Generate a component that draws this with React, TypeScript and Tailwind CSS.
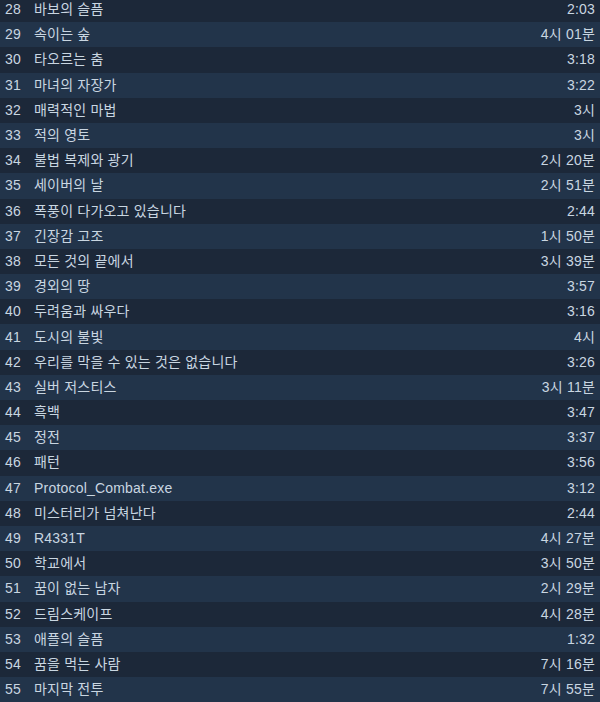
import React from "react";

// 트랙 목록 (28 ~ 55)
const tracks: [string, string][] = [
  ["바보의 슬픔", "2:03"],
  ["속이는 숲", "4시 01분"],
  ["타오르는 춤", "3:18"],
  ["마녀의 자장가", "3:22"],
  ["매력적인 마법", "3시"],
  ["적의 영토", "3시"],
  ["불법 복제와 광기", "2시 20분"],
  ["세이버의 날", "2시 51분"],
  ["폭풍이 다가오고 있습니다", "2:44"],
  ["긴장감 고조", "1시 50분"],
  ["모든 것의 끝에서", "3시 39분"],
  ["경외의 땅", "3:57"],
  ["두려움과 싸우다", "3:16"],
  ["도시의 불빛", "4시"],
  ["우리를 막을 수 있는 것은 없습니다", "3:26"],
  ["실버 저스티스", "3시 11분"],
  ["흑백", "3:47"],
  ["정전", "3:37"],
  ["패턴", "3:56"],
  ["Protocol_Combat.exe", "3:12"],
  ["미스터리가 넘쳐난다", "2:44"],
  ["R4331T", "4시 27분"],
  ["학교에서", "3시 50분"],
  ["꿈이 없는 남자", "2시 29분"],
  ["드림스케이프", "4시 28분"],
  ["애플의 슬픔", "1:32"],
  ["꿈을 먹는 사람", "7시 16분"],
  ["마지막 전투", "7시 55분"],
];

export default function App() {
  return (
    <div
      className="h-[702px] w-[600px] overflow-hidden bg-[#22344a] text-[14px] tracking-[0.2px] text-[#c9d6e1]"
      style={{ fontFamily: '"Liberation Sans", Arial, "Noto Sans CJK KR", sans-serif' }}
    >
      <div className="-mt-[3px] flex flex-col">
        {tracks.map(([title, time], i) => (
          <div
            key={i}
            className={`flex h-[25.2px] items-center ${i % 2 === 0 ? "bg-[#1c2839]" : "bg-[#22344a]"}`}
          >
            <div className="w-[34px] shrink-0 pl-[5px]">{28 + i}</div>
            <div className="flex-1 truncate">{title}</div>
            <div className="shrink-0 pr-[5px] text-right">{time}</div>
          </div>
        ))}
      </div>
    </div>
  );
}
